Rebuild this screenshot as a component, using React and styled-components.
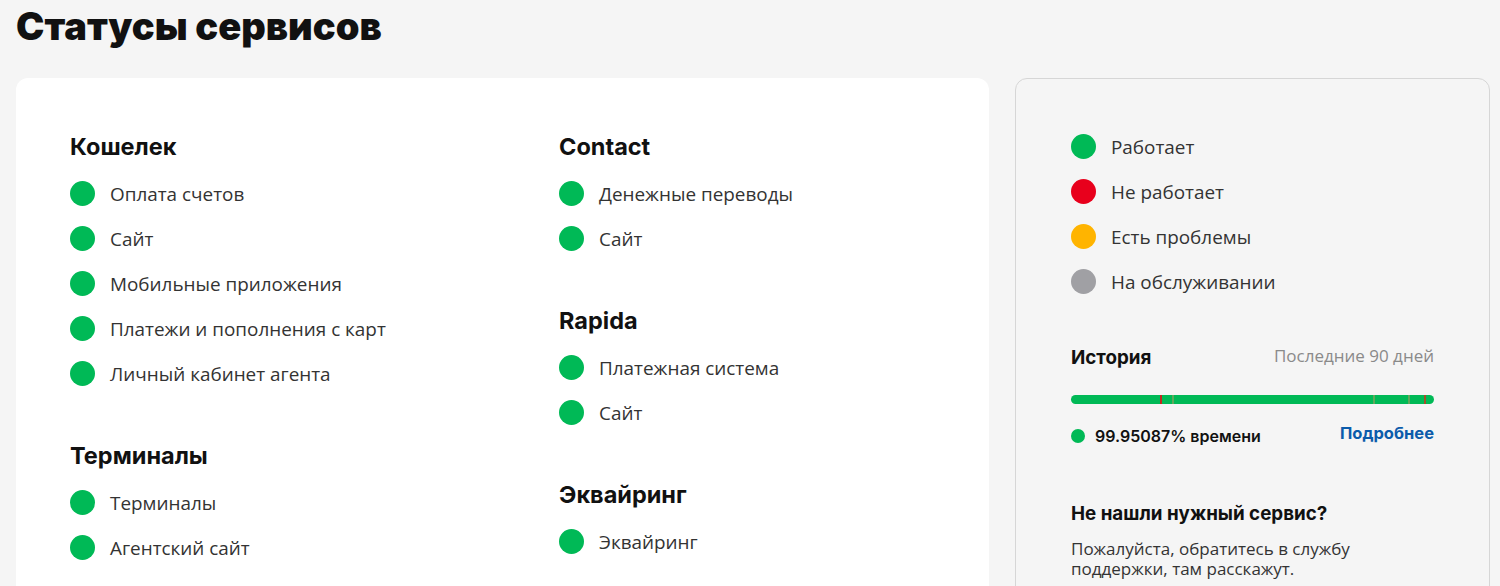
import React from "react";
import styled, { createGlobalStyle } from "styled-components";

const GlobalStyle = createGlobalStyle`
    body {
        margin: 0;
        background-color: #f5f5f5;
        font-family: "Open Sans", "Liberation Sans", sans-serif;
        color: #333333;
    }
`;

const Page = styled.div`
    padding: 0 10px 0 16px;
    height: 586px;
    overflow: hidden;
`;

const Title = styled.h1`
    margin: 0;
    padding-top: 2px;
    height: 76px;
    font-family: "Inter", "Noto Sans", sans-serif;
    font-size: 38px;
    font-weight: 900;
    line-height: 48px;
    color: #111111;
`;

const Layout = styled.div`
    display: grid;
    grid-template-columns: 1fr 475px;
    gap: 26px;
    align-items: start;
`;

const Card = styled.section`
    background-color: #ffffff;
    border-radius: 12px;
    padding: 54px 54px 60px;
    display: grid;
    grid-template-columns: 489px 1fr;
    min-height: 600px;
    box-sizing: border-box;
`;

const Column = styled.div`
    display: flex;
    flex-direction: column;
    gap: 55px;
`;

const Group = styled.div`
    display: flex;
    flex-direction: column;
`;

const GroupTitle = styled.h2`
    margin: 0 0 19px;
    font-family: "Inter", "Noto Sans", sans-serif;
    font-size: 23.5px;
    font-weight: 700;
    line-height: 30px;
    color: #111111;
`;

const List = styled.ul`
    margin: 0;
    padding: 0;
    list-style: none;
    display: flex;
    flex-direction: column;
    gap: 20px;
`;

const Item = styled.li`
    display: flex;
    align-items: center;
    height: 25px;
    font-size: 18.9px;
    color: #333333;
`;

const Dot = styled.span`
    flex: none;
    width: ${(props) => props.size || 25}px;
    height: ${(props) => props.size || 25}px;
    border-radius: 50%;
    background-color: ${(props) => props.color || "#00b956"};
    margin-right: ${(props) => props.gap || 15}px;
`;

const Side = styled.aside`
    border: 1px solid #d6d6d6;
    border-radius: 12px;
    padding: 55px 55px 40px;
    min-height: 600px;
    box-sizing: border-box;
`;

const Legend = styled(List)`
    margin-bottom: 52px;
`;

const HistoryHead = styled.div`
    display: flex;
    justify-content: space-between;
    align-items: flex-start;
`;

const SubTitle = styled.h3`
    margin: 0;
    font-family: "Inter", "Noto Sans", sans-serif;
    font-size: 18.8px;
    font-weight: 700;
    line-height: 24px;
    color: #111111;
`;

const Muted = styled.span`
    font-size: 17px;
    line-height: 20px;
    color: #8a8a8a;
`;

const Bar = styled.div`
    position: relative;
    margin-top: 25px;
    height: 9px;
    border-radius: 5px;
    background-color: #00b956;
    overflow: hidden;
`;

const Mark = styled.span`
    position: absolute;
    top: 0;
    bottom: 0;
    width: 2px;
    background-color: ${(props) => props.color};
`;

const Uptime = styled.div`
    margin-top: 19px;
    display: flex;
    justify-content: space-between;
    align-items: center;
    height: 22px;
`;

const Percent = styled.span`
    display: flex;
    align-items: center;
    font-family: "Inter", "Noto Sans", sans-serif;
    font-size: 16px;
    font-weight: 600;
    color: #111111;
    padding-top: 4px;
`;

const More = styled.a`
    font-family: "Inter", "Noto Sans", sans-serif;
    font-size: 16.5px;
    font-weight: 700;
    color: #0b5cab;
    text-decoration: none;
    margin-top: -2px;
`;

const Help = styled.div`
    margin-top: 57px;
`;

const HelpText = styled.p`
    margin: 13px 0 0;
    font-size: 17px;
    line-height: 20px;
    color: #333333;
    max-width: 300px;
`;

const groups = [
    [
        { title: "Кошелек", items: ["Оплата счетов", "Сайт", "Мобильные приложения", "Платежи и пополнения с карт", "Личный кабинет агента"] },
        { title: "Терминалы", items: ["Терминалы", "Агентский сайт"] },
    ],
    [
        { title: "Contact", items: ["Денежные переводы", "Сайт"] },
        { title: "Rapida", items: ["Платежная система", "Сайт"] },
        { title: "Эквайринг", items: ["Эквайринг"] },
    ],
];

const legend = [
    { color: "#00b956", label: "Работает" },
    { color: "#e8001c", label: "Не работает" },
    { color: "#ffb400", label: "Есть проблемы" },
    { color: "#a0a0a4", label: "На обслуживании" },
];

const marks = [
    { left: 24.5, color: "#c0281e" },
    { left: 27.8, color: "#5fa85a" },
    { left: 83.2, color: "#5fa85a" },
    { left: 92.8, color: "#5fa85a" },
    { left: 97.2, color: "#a0502a" },
];

function App() {
    return (
        <Page>
            <GlobalStyle />
            <Title>Статусы сервисов</Title>
            <Layout>
                <Card>
                    {groups.map((col, i) => (
                        <Column key={i}>
                            {col.map((g) => (
                                <Group key={g.title}>
                                    <GroupTitle>{g.title}</GroupTitle>
                                    <List>
                                        {g.items.map((it) => (
                                            <Item key={it}>
                                                <Dot />
                                                {it}
                                            </Item>
                                        ))}
                                    </List>
                                </Group>
                            ))}
                        </Column>
                    ))}
                </Card>
                <Side>
                    <Legend>
                        {legend.map((l) => (
                            <Item key={l.label}>
                                <Dot color={l.color} />
                                {l.label}
                            </Item>
                        ))}
                    </Legend>
                    <HistoryHead>
                        <SubTitle>История</SubTitle>
                        <Muted>Последние 90 дней</Muted>
                    </HistoryHead>
                    <Bar>
                        {marks.map((m, i) => (
                            <Mark key={i} color={m.color} style={{ left: `${m.left}%` }} />
                        ))}
                    </Bar>
                    <Uptime>
                        <Percent>
                            <Dot size={14} gap={10} />
                            99.95087% времени
                        </Percent>
                        <More href="#">Подробнее</More>
                    </Uptime>
                    <Help>
                        <SubTitle>Не нашли нужный сервис?</SubTitle>
                        <HelpText>Пожалуйста, обратитесь в службу поддержки, там расскажут.</HelpText>
                    </Help>
                </Side>
            </Layout>
        </Page>
    );
}

export default App;
